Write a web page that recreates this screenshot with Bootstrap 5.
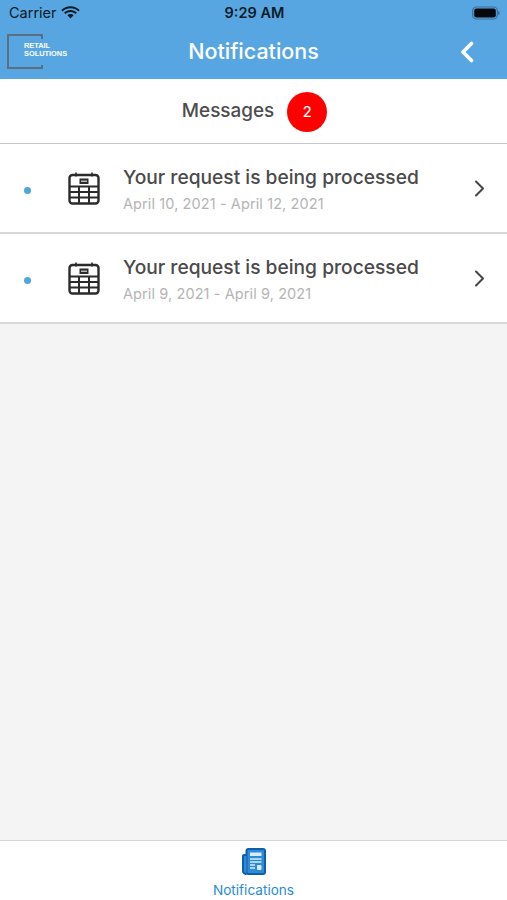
<!DOCTYPE html>
<html lang="en">
<head>
    <meta charset="UTF-8">
    <meta name="viewport" content="width=device-width, initial-scale=1.0">
    <title>Notifications</title>
    <link href="https://cdn.jsdelivr.net/npm/bootstrap@5.3.0/dist/css/bootstrap.min.css" rel="stylesheet">
    <style>
        body { font-family: Inter, "Liberation Sans", sans-serif; background: #f4f4f4; height: 900px; overflow: hidden; }
        .app-screen { height: 900px; }
        .app-header { background: #57a6e1; height: 79px; flex: none; }
        .status-row { height: 26px; padding: 0 7px 0 9px; font-size: 14.500px; color: #0c1a26; }
        .status-time { font-weight: 600; font-size: 14.500px; }
        .status-col { width: 120px; }
        .title-row { height: 53px; padding: 0 7px 2px 7px; }
        .title-text { color: #fff; font-size: 21.500px; font-weight: 500; }
        .side-col { width: 62px; }
        .brand-box { position: relative; height: 35px; }
        .brand-text { position: absolute; left: 17px; top: 8px; color: #fff; font: 700 7.400px/8px "Liberation Sans", sans-serif; white-space: nowrap; }
        .back-col { padding-right: 26px; }
        .msg-head { height: 65px; flex: none; background: #fff; border-bottom: 1px solid #c9c9c9; color: #4d4d4d; font-size: 18.900px; font-weight: 500; padding: 1px 0 0 2px; }
        .count-dot { width: 40px; height: 40px; background: #fe0000; color: #fff; font-size: 14.500px; margin-left: 13px; }
        .msg-row { height: 90px; flex: none; background: #fff; border-bottom: 2px solid #d8d8d8; padding: 0 22px 0 24px; }
        .unread-dot { width: 7px; height: 7px; background: #4fa5dd; flex: none; margin: 4px 37px 0 0; }
        .msg-icon { flex: none; margin-right: 23px; }
        .msg-title { color: #4a4a4a; font-size: 19.200px; font-weight: 500; line-height: 24px; margin-top: 1px; }
        .msg-date { color: #b4b4b4; font-size: 14.500px; line-height: 18px; margin-top: 6px; letter-spacing: .1px; }
        .tab-bar { height: 60px; flex: none; background: #fff; border-top: 1px solid #d6d6d6; padding-top: 7px; color: #2a8ad9; font-size: 13.600px; }
        .tab-label { margin-top: 7px; line-height: 16px; }
    </style>
</head>
<body>
    <div class="app-screen d-flex flex-column">
        <div class="app-header">
            <div class="status-row d-flex align-items-center justify-content-between">
                <div class="status-col d-flex align-items-center gap-1">
                    Carrier
                    <svg width="19" height="14" viewBox="0 0 19 14"><path d="M9.500 2.200c3 0 5.800 1.200 7.900 3.200l1.300-1.400C16.300 1.600 13 .2 9.500.2S2.700 1.600.3 4l1.300 1.400C3.700 3.400 6.500 2.200 9.500 2.200z" fill="#0c1a26"/><path d="M9.500 6.100c1.900 0 3.700.7 5 2l1.400-1.400C14.200 5 11.900 4.100 9.500 4.100S4.800 5 3.100 6.700L4.500 8.100c1.300-1.300 3.100-2 5-2z" fill="#0c1a26"/><path d="M9.500 8c-1.200 0-2.300.5-3.100 1.200l3.100 3.400 3.100-3.400C11.800 8.500 10.700 8 9.500 8z" fill="#0c1a26"/></svg>
                </div>
                <div class="status-time">9:29 AM</div>
                <div class="status-col d-flex justify-content-end">
                    <svg width="28" height="14" viewBox="0 0 28 14"><rect x=".7" y="1" width="24.600" height="12" rx="3.600" fill="none" stroke="#3d6f97" stroke-width="1.200"/><rect x="2.200" y="2.500" width="21.600" height="9" rx="2.200" fill="#05090d"/><rect x="26" y="5" width="1.500" height="4" rx=".7" fill="#3d6f97"/></svg>
                </div>
            </div>
            <div class="title-row d-flex align-items-center justify-content-between">
                <div class="side-col brand-box">
                    <svg width="36" height="35" viewBox="0 0 36 35"><path d="M35 5V1H1v33h34v-3" fill="none" stroke="#5c6f80" stroke-width="2"/></svg>
                    <div class="brand-text">RETAIL<br>SOLUTIONS</div>
                </div>
                <div class="title-text">Notifications</div>
                <div class="side-col back-col d-flex justify-content-end">
                    <svg width="14" height="22" viewBox="0 0 14 22"><path d="M11.500 2.500 3 11l8.500 8.500" fill="none" stroke="#fff" stroke-width="3.600" stroke-linecap="round" stroke-linejoin="round"/></svg>
                </div>
            </div>
        </div>

        <div class="msg-head d-flex align-items-center justify-content-center">
            Messages
            <span class="count-dot rounded-circle d-flex align-items-center justify-content-center">2</span>
        </div>

        <div class="msg-row d-flex align-items-center">
            <span class="unread-dot rounded-circle"></span>
            <svg class="msg-icon" width="32" height="33" viewBox="0 0 32 33"><use href="#cal"/></svg>
            <div class="flex-grow-1">
                <div class="msg-title">Your request is being processed</div>
                <div class="msg-date">April 10, 2021 - April 12, 2021</div>
            </div>
            <svg width="11" height="17" viewBox="0 0 11 17"><path d="M2 1.500 9 8.500l-7 7" fill="none" stroke="#444" stroke-width="2" stroke-linecap="round" stroke-linejoin="round"/></svg>
        </div>
        <div class="msg-row d-flex align-items-center">
            <span class="unread-dot rounded-circle"></span>
            <svg class="msg-icon" width="32" height="33" viewBox="0 0 32 33"><use href="#cal"/></svg>
            <div class="flex-grow-1">
                <div class="msg-title">Your request is being processed</div>
                <div class="msg-date">April 9, 2021 - April 9, 2021</div>
            </div>
            <svg width="11" height="17" viewBox="0 0 11 17"><path d="M2 1.500 9 8.500l-7 7" fill="none" stroke="#444" stroke-width="2" stroke-linecap="round" stroke-linejoin="round"/></svg>
        </div>

        <div class="flex-grow-1"></div>

        <div class="tab-bar d-flex flex-column align-items-center">
            <svg width="24" height="27" viewBox="0 0 24 27">
                <rect x="4.500" y="1" width="18.500" height="25" rx="2" fill="#2f8ad8" stroke="#0f5fa8" stroke-width="2"/>
                <path d="M4.500 7H2a1 1 0 0 0-1 1v15a3 3 0 0 0 3.500 3" fill="#2f8ad8" stroke="#0f5fa8" stroke-width="2"/>
                <rect x="8" y="4.500" width="11.500" height="3.500" fill="#d8ebfa"/>
                <path d="M8 11h11.500M8 14h11.500M8 17h5M8 20h5" stroke="#d8ebfa" stroke-width="1.300"/>
                <rect x="15" y="17" width="4.500" height="5" rx="1" fill="#d8ebfa"/>
            </svg>
            <div class="tab-label">Notifications</div>
        </div>
    </div>

    <svg width="0" height="0" class="position-absolute">
        <defs>
            <g id="cal">
                <rect x="1.500" y="3" width="29" height="28.500" rx="3" fill="#fff" stroke="#2b2b2b" stroke-width="2.400"/>
                <path d="M8 .5v4M24 .5v4" stroke="#2b2b2b" stroke-width="1.600"/>
                <rect x="11.500" y="6.500" width="9" height="5.500" fill="#2b2b2b"/>
                <path d="M13 9.200h6" stroke="#ddd" stroke-width="1.200"/>
                <path d="M2 14.500h28M2 20h28M2 25.500h28" stroke="#2b2b2b" stroke-width="2.200"/>
                <path d="M11 14v17M21 14v17" stroke="#2b2b2b" stroke-width="2"/>
            </g>
        </defs>
    </svg>
    <script src="https://cdn.jsdelivr.net/npm/bootstrap@5.3.0/dist/js/bootstrap.bundle.min.js"></script>
</body>
</html>
